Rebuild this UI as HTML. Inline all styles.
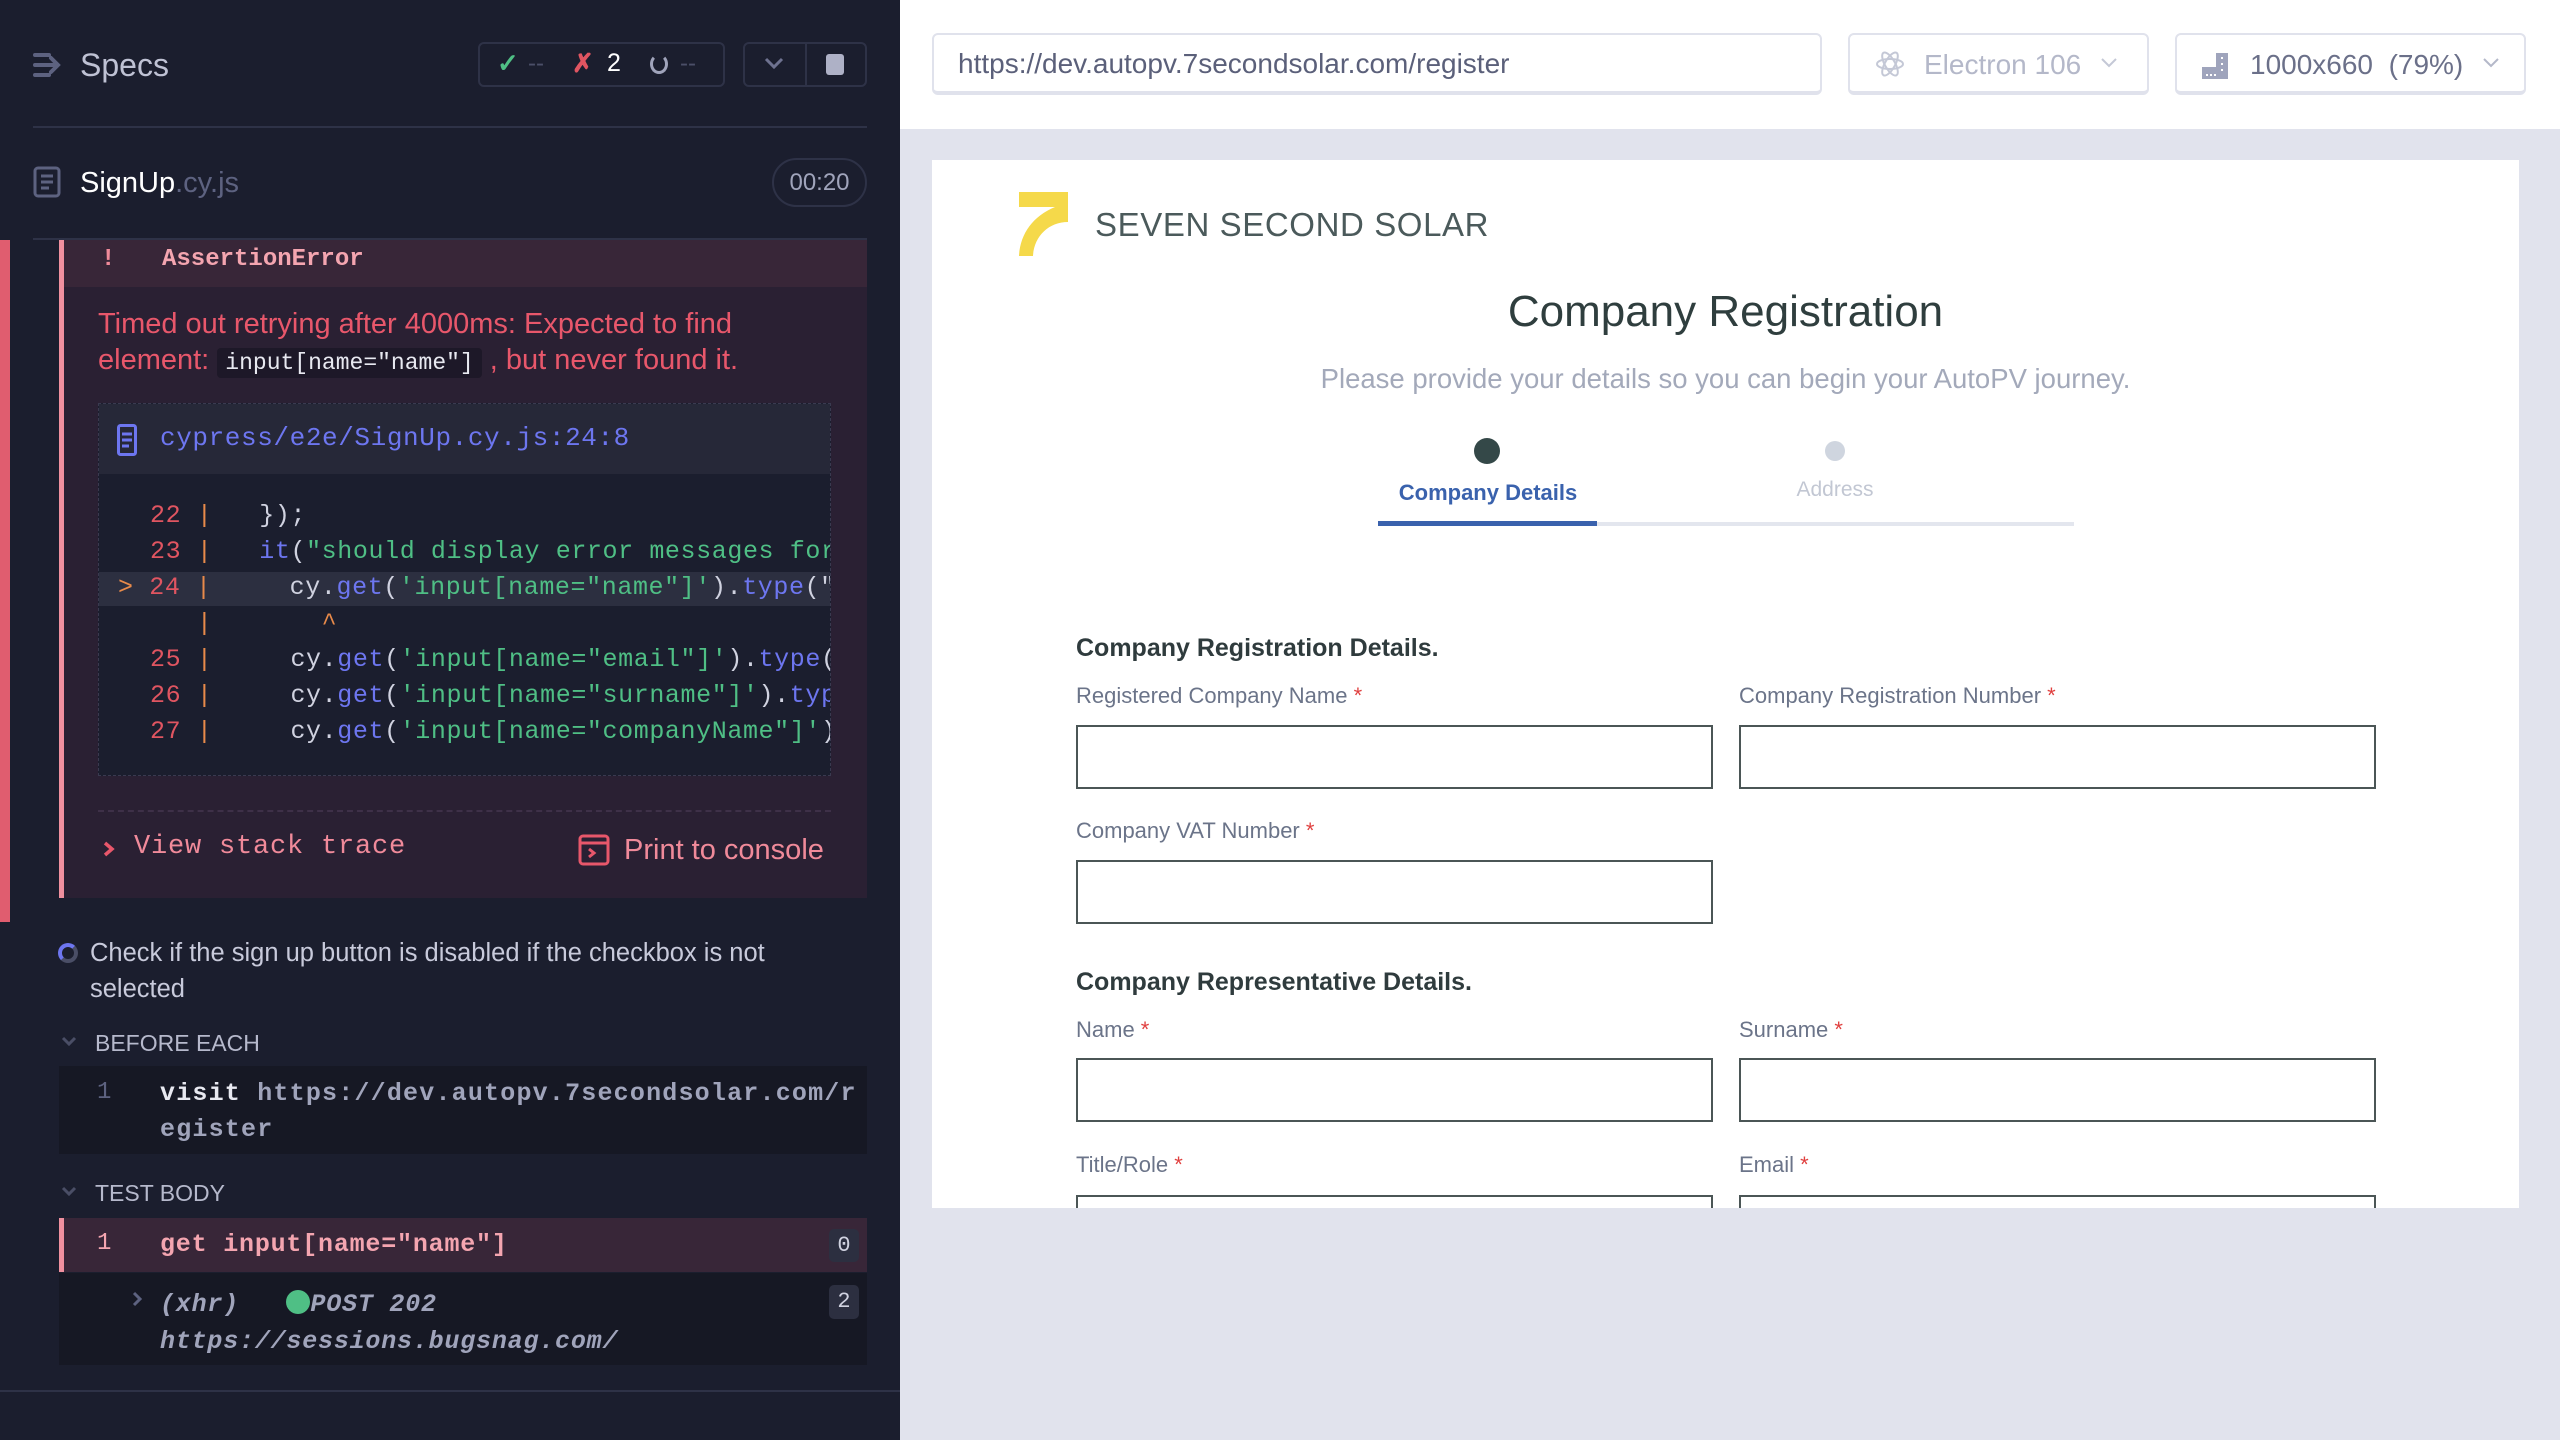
<!DOCTYPE html>
<html><head><meta charset="utf-8">
<style>
*{box-sizing:border-box;margin:0;padding:0}
body{width:2560px;height:1440px;overflow:hidden;background:#e1e3ed;font-family:"Liberation Sans",sans-serif;position:relative}
.a{position:absolute;white-space:nowrap}
.mono{font-family:"Liberation Mono",monospace}
#left{position:absolute;left:0;top:0;width:900px;height:1440px;background:#1b1e2e}
.ln{color:#e05561}
.g{color:#4fbf85}
.b{color:#6d76f0}
.w{color:#d0d2e0}
.code div{position:absolute;left:0;height:36px;line-height:36px;font-size:25px;letter-spacing:0.6px;white-space:pre}
.inp{position:absolute;width:637px;height:64px;border:2px solid #4b5656;background:#fff}
.lbl{position:absolute;font-size:22px;color:#6b7489;white-space:nowrap}
.lbl span{color:#e0403f}
.h{position:absolute;font-size:25px;font-weight:bold;color:#2f3b3d;white-space:nowrap}
</style></head><body>
<div id="left">
  <svg class="a" style="left:33px;top:52px" width="30" height="26" viewBox="0 0 30 26"><g stroke="#5d6280" stroke-width="4" stroke-linecap="round" fill="none"><path d="M2 3h14M2 13h20M2 23h14M18 6l7 7-7 7"/></g></svg>
  <div class="a" style="left:80px;top:47px;font-size:32px;color:#bfc2d4">Specs</div>
  <div class="a" style="left:478px;top:42px;width:247px;height:45px;border:2px solid #2e3247;border-radius:6px"></div>
  <div class="a" style="left:497px;top:48px;font-size:26px;color:#4fbf85;font-weight:bold">✓</div>
  <div class="a" style="left:528px;top:50px;font-size:24px;color:#4b4f68">--</div>
  <div class="a" style="left:572px;top:48px;font-size:26px;color:#e05561;font-weight:bold">✗</div>
  <div class="a" style="left:607px;top:49px;font-size:25px;color:#fff">2</div>
  <div class="a" style="left:650px;top:54px;width:18px;height:20px;border:3px solid #a0a4bb;border-radius:50%;border-top-color:transparent"></div>
  <div class="a" style="left:680px;top:50px;font-size:24px;color:#4b4f68">--</div>
  <div class="a" style="left:743px;top:42px;width:124px;height:45px;border:2px solid #2e3247;border-radius:6px"></div>
  <div class="a" style="left:805px;top:42px;width:2px;height:45px;background:#2e3247"></div>
  <svg class="a" style="left:763px;top:56px" width="22" height="14" viewBox="0 0 22 14"><path d="M3 3l8 8 8-8" stroke="#6e7290" stroke-width="3" fill="none"/></svg>
  <div class="a" style="left:826px;top:54px;width:18px;height:21px;background:#aeb1c6;border-radius:3px"></div>
  <div class="a" style="left:33px;top:126px;width:834px;height:2px;background:#2e3247"></div>
  <svg class="a" style="left:33px;top:166px" width="28" height="32" viewBox="0 0 28 32"><rect x="2" y="2" width="24" height="28" rx="3" fill="none" stroke="#5d6280" stroke-width="3"/><path d="M8 10h12M8 16h12M8 22h8" stroke="#5d6280" stroke-width="3"/></svg>
  <div class="a" style="left:80px;top:167px;font-size:29px;color:#fff">SignUp<span style="color:#5d6280">.cy.js</span></div>
  <div class="a" style="left:772px;top:158px;width:95px;height:49px;border:2px solid #2e3247;border-radius:25px;font-size:24px;color:#a0a4bb;text-align:center;line-height:45px">00:20</div>
  <div class="a" style="left:33px;top:238px;width:834px;height:2px;background:#2e3247"></div>
  <div class="a" style="left:0;top:240px;width:10px;height:682px;background:#e05d6f"></div>
  <div class="a" style="left:59px;top:240px;width:808px;height:658px;background:#2a2033;border-left:5px solid #f0909f"></div>
  <div class="a" style="left:64px;top:240px;width:803px;height:47px;background:#382638"></div>
  <div class="a mono" style="left:101px;top:246px;font-size:24px;font-weight:bold;color:#f08a9a">!</div>
  <div class="a mono" style="left:162px;top:246px;font-size:24px;font-weight:bold;color:#f4a5b0">AssertionError</div>
  <div class="a" style="left:98px;top:306px;font-size:29px;color:#e8576b;line-height:36px;white-space:normal;width:760px">Timed out retrying after 4000ms: Expected to find<br>element: <span class="mono" style="background:#1d1828;color:#e8e9f1;padding:2px 8px;border-radius:4px;font-size:23px">input[name="name"]</span> , but never found it.</div>
  <div class="a" style="left:98px;top:403px;width:733px;height:373px;background:#1b1e2e;border:1px dashed #3a3a50"></div>
  <div class="a" style="left:99px;top:404px;width:731px;height:70px;background:#262838"></div>
  <svg class="a" style="left:117px;top:424px" width="20" height="32" viewBox="0 0 20 32"><rect x="1.5" y="1.5" width="17" height="29" rx="2" fill="none" stroke="#6d76f0" stroke-width="3"/><path d="M5 10h10M5 16h10M5 22h7" stroke="#6d76f0" stroke-width="3"/></svg>
  <div class="a mono" style="left:160px;top:423px;font-size:26px;letter-spacing:0.6px;color:#6d76f0">cypress/e2e/SignUp.cy.js:24:8</div>
  <div class="a" style="left:99px;top:572px;width:731px;height:34px;background:#2c2f40"></div>
  <div class="code a mono" style="left:0;top:498px;width:830px;height:260px;overflow:hidden">
    <div style="left:150px;top:0"><span class="ln">22</span> <span style="color:#e88a4a">|</span>   <span class="w">});</span></div>
    <div style="left:150px;top:36px"><span class="ln">23</span> <span style="color:#e88a4a">|</span>   <span class="b">it</span><span class="w">(</span><span class="g">"should display error messages for</span></div>
    <div style="left:118px;top:72px"><span style="color:#e88a4a">&gt;</span> <span class="ln">24</span> <span style="color:#e88a4a">|</span>     <span class="w">cy.</span><span class="b">get</span><span class="w">(</span><span class="g">'input[name="name"]'</span><span class="w">).</span><span class="b">type</span><span class="w">("</span></div>
    <div style="left:150px;top:108px">   <span style="color:#e88a4a">|</span>       <span style="color:#e88a4a">^</span></div>
    <div style="left:150px;top:144px"><span class="ln">25</span> <span style="color:#e88a4a">|</span>     <span class="w">cy.</span><span class="b">get</span><span class="w">(</span><span class="g">'input[name="email"]'</span><span class="w">).</span><span class="b">type</span><span class="w">(</span></div>
    <div style="left:150px;top:180px"><span class="ln">26</span> <span style="color:#e88a4a">|</span>     <span class="w">cy.</span><span class="b">get</span><span class="w">(</span><span class="g">'input[name="surname"]'</span><span class="w">).</span><span class="b">typ</span></div>
    <div style="left:150px;top:216px"><span class="ln">27</span> <span style="color:#e88a4a">|</span>     <span class="w">cy.</span><span class="b">get</span><span class="w">(</span><span class="g">'input[name="companyName"]'</span><span class="w">)</span></div>
  </div>
  <div class="a" style="left:98px;top:810px;width:733px;border-top:2px dashed #3e3048"></div>
  <svg class="a" style="left:102px;top:840px" width="14" height="18" viewBox="0 0 14 18"><path d="M3 3l7 6-7 6" stroke="#e8576b" stroke-width="3.5" fill="none"/></svg>
  <div class="a mono" style="left:134px;top:832px;font-size:27px;letter-spacing:0.8px;color:#f08a9a">View stack trace</div>
  <svg class="a" style="left:578px;top:834px" width="32" height="32" viewBox="0 0 32 32"><rect x="2" y="2" width="28" height="28" rx="3" fill="none" stroke="#e8576b" stroke-width="3"/><path d="M2 9h28M11 15l5 4-5 4" stroke="#e8576b" stroke-width="3" fill="none"/></svg>
  <div class="a" style="left:624px;top:834px;font-size:29px;color:#f08a9a">Print to console</div>
  <div class="a" style="left:58px;top:943px;width:20px;height:20px;border:4px solid #4a4e66;border-top-color:#6d76f0;border-left-color:#6d76f0;border-radius:50%"></div>
  <div class="a" style="left:90px;top:935px;font-size:25.5px;color:#c8cadb;line-height:36px">Check if the sign up button is disabled if the checkbox is not<br>selected</div>
  <svg class="a" style="left:61px;top:1035px" width="16" height="12" viewBox="0 0 16 12"><path d="M2 3l6 6 6-6" stroke="#4a4e66" stroke-width="3" fill="none"/></svg>
  <div class="a" style="left:95px;top:1030px;font-size:23px;color:#b6b9cc">BEFORE EACH</div>
  <div class="a" style="left:59px;top:1066px;width:808px;height:88px;background:#161824"></div>
  <div class="a mono" style="left:97px;top:1079px;font-size:24px;color:#5d6280">1</div>
  <div class="a mono" style="left:160px;top:1076px;font-size:25px;letter-spacing:1.2px;line-height:36px;white-space:normal;width:700px;color:#a0a4bb;font-weight:bold;word-break:break-all"><span style="color:#e8e9f1">visit</span>  https://dev.autopv.7secondsolar.com/register</div>
  <svg class="a" style="left:61px;top:1185px" width="16" height="12" viewBox="0 0 16 12"><path d="M2 3l6 6 6-6" stroke="#4a4e66" stroke-width="3" fill="none"/></svg>
  <div class="a" style="left:95px;top:1180px;font-size:23px;color:#b6b9cc">TEST BODY</div>
  <div class="a" style="left:59px;top:1218px;width:808px;height:54px;background:#382638;border-left:5px solid #f0909f"></div>
  <div class="a mono" style="left:97px;top:1230px;font-size:24px;color:#f4a5b0">1</div>
  <div class="a mono" style="left:160px;top:1230px;font-size:25px;letter-spacing:0.8px;font-weight:bold;color:#f4a5b0">get  input[name="name"]</div>
  <div class="a mono" style="left:829px;top:1229px;width:30px;height:33px;background:#2c2f40;border-radius:5px;color:#d0d2e0;font-size:22px;text-align:center;line-height:33px">0</div>
  <div class="a" style="left:59px;top:1273px;width:808px;height:92px;background:#161824"></div>
  <svg class="a" style="left:132px;top:1290px" width="12" height="18" viewBox="0 0 12 18"><path d="M2 3l6 6-6 6" stroke="#5d6280" stroke-width="3" fill="none"/></svg>
  <div class="a mono" style="left:160px;top:1286px;font-size:25px;letter-spacing:0.8px;font-style:italic;color:#a0a4bb;font-weight:bold;line-height:37px">(xhr)  &nbsp; <span style="display:inline-block;width:24px;height:24px;border-radius:50%;background:#4fbf85;vertical-align:-3px"></span>POST 202<br>https://sessions.bugsnag.com/</div>
  <div class="a mono" style="left:829px;top:1285px;width:30px;height:34px;background:#2c2f40;border-radius:5px;color:#d0d2e0;font-size:22px;text-align:center;line-height:34px">2</div>
  <div class="a" style="left:0;top:1390px;width:900px;height:2px;background:#2e3247"></div>
</div>
<div class="a" style="left:900px;top:0;width:1660px;height:129px;background:#fff"></div>
<div class="a" style="left:932px;top:33px;width:890px;height:62px;border:2px solid #e0e2ec;border-bottom-width:4px;border-radius:6px;font-size:28px;color:#5b607a;padding-left:24px;line-height:58px">https://dev.autopv.7secondsolar.com/register</div>
<div class="a" style="left:1848px;top:33px;width:301px;height:62px;border:2px solid #e0e2ec;border-bottom-width:4px;border-radius:6px"></div>
<svg class="a" style="left:1875px;top:47px" width="30" height="34" viewBox="0 0 30 34"><g fill="none" stroke="#c4c8d6" stroke-width="2"><ellipse cx="15" cy="17" rx="13" ry="5"/><ellipse cx="15" cy="17" rx="13" ry="5" transform="rotate(60 15 17)"/><ellipse cx="15" cy="17" rx="13" ry="5" transform="rotate(120 15 17)"/></g></svg>
<div class="a" style="left:1924px;top:49px;font-size:28px;color:#b4b8c9">Electron 106</div>
<svg class="a" style="left:2100px;top:57px" width="18" height="12" viewBox="0 0 18 12"><path d="M2 2l7 7 7-7" stroke="#c4c8d6" stroke-width="2" fill="none"/></svg>
<div class="a" style="left:2175px;top:33px;width:351px;height:62px;border:2px solid #e0e2ec;border-bottom-width:4px;border-radius:6px"></div>
<svg class="a" style="left:2200px;top:47px" width="32" height="34" viewBox="0 0 32 34"><path d="M2 32V20h14V6h12v26z" fill="#9fa4bc"/><path d="M6 28h2M10 28h2M14 28h2M22 10v2M22 16v2M22 22v2" stroke="#fff" stroke-width="2"/></svg>
<div class="a" style="left:2250px;top:49px;font-size:28px;color:#6b7089">1000x660 &nbsp;(79%)</div>
<svg class="a" style="left:2482px;top:57px" width="18" height="12" viewBox="0 0 18 12"><path d="M2 2l7 7 7-7" stroke="#b4b8c9" stroke-width="2" fill="none"/></svg>
<div class="a" style="left:932px;top:160px;width:1587px;height:1048px;background:#fff;overflow:hidden">
  <svg class="a" style="left:87px;top:32px" width="50" height="64" viewBox="0 0 50 64"><path d="M0 0H49V30C30 30 15 44 14 64H0C1 42 14 24 36 15H0Z" fill="#f5d94a"/></svg>
  <div class="a" style="left:163px;top:46px;font-size:33px;letter-spacing:0.6px;color:#4b5a5b">SEVEN SECOND SOLAR</div>
  <div class="a" style="left:0;width:1587px;top:127px;text-align:center;font-size:44px;color:#2f3e3e">Company Registration</div>
  <div class="a" style="left:0;width:1587px;top:203px;text-align:center;font-size:27.5px;color:#a3a9ba">Please provide your details so you can begin your AutoPV journey.</div>
  <div class="a" style="left:542px;top:278px;width:26px;height:26px;border-radius:50%;background:#344848"></div>
  <div class="a" style="left:893px;top:281px;width:20px;height:20px;border-radius:50%;background:#cfd5df"></div>
  <div class="a" style="left:446px;width:220px;top:320px;text-align:center;font-size:22px;font-weight:bold;color:#3a62ad">Company Details</div>
  <div class="a" style="left:793px;width:220px;top:318px;text-align:center;font-size:21px;color:#c2c7d3">Address</div>
  <div class="a" style="left:446px;top:362px;width:696px;height:4px;background:#e3e6ee"></div>
  <div class="a" style="left:446px;top:361px;width:219px;height:5px;background:#3a62ad"></div>
  <div class="h" style="left:144px;top:474px">Company Registration Details.</div>
  <div class="lbl" style="left:144px;top:523px">Registered Company Name <span>*</span></div>
  <div class="lbl" style="left:807px;top:523px">Company Registration Number <span>*</span></div>
  <div class="inp" style="left:144px;top:565px"></div>
  <div class="inp" style="left:807px;top:565px"></div>
  <div class="lbl" style="left:144px;top:658px">Company VAT Number <span>*</span></div>
  <div class="inp" style="left:144px;top:700px"></div>
  <div class="h" style="left:144px;top:808px">Company Representative Details.</div>
  <div class="lbl" style="left:144px;top:857px">Name <span>*</span></div>
  <div class="lbl" style="left:807px;top:857px">Surname <span>*</span></div>
  <div class="inp" style="left:144px;top:898px"></div>
  <div class="inp" style="left:807px;top:898px"></div>
  <div class="lbl" style="left:144px;top:992px">Title/Role <span>*</span></div>
  <div class="lbl" style="left:807px;top:992px">Email <span>*</span></div>
  <div class="inp" style="left:144px;top:1035px"></div>
  <div class="inp" style="left:807px;top:1035px"></div>
</div>
</body></html>
